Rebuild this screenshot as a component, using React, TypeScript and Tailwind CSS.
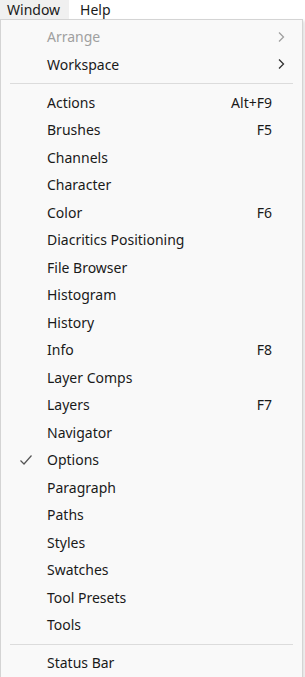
const items: { label: string; shortcut?: string; checked?: boolean }[] = [
  { label: 'Actions', shortcut: 'Alt+F9' },
  { label: 'Brushes', shortcut: 'F5' },
  { label: 'Channels' },
  { label: 'Character' },
  { label: 'Color', shortcut: 'F6' },
  { label: 'Diacritics Positioning' },
  { label: 'File Browser' },
  { label: 'Histogram' },
  { label: 'History' },
  { label: 'Info', shortcut: 'F8' },
  { label: 'Layer Comps' },
  { label: 'Layers', shortcut: 'F7' },
  { label: 'Navigator' },
  { label: 'Options', checked: true },
  { label: 'Paragraph' },
  { label: 'Paths' },
  { label: 'Styles' },
  { label: 'Swatches' },
  { label: 'Tool Presets' },
  { label: 'Tools' },
];

const Chevron = ({ color }: { color: string }) => (
  <svg width="8" height="12" viewBox="0 0 8 12" fill="none">
    <path d="M2 1.5 L6.5 6 L2 10.5" stroke={color} strokeWidth="1.3" />
  </svg>
);

const Check = () => (
  <svg width="14" height="12" viewBox="0 0 14 12" fill="none">
    <path d="M1.5 6.5 L5 10 L12.5 1.5" stroke="#555" strokeWidth="1.2" />
  </svg>
);

const Row = ({
  label,
  shortcut,
  checked,
  disabled,
  sub,
}: {
  label: string;
  shortcut?: string;
  checked?: boolean;
  disabled?: boolean;
  sub?: boolean;
}) => (
  <div className="flex h-[27.5px] items-center">
    <div className="flex w-[46px] items-center justify-center pl-[4px]">{checked && <Check />}</div>
    <span className={`flex-1 ${disabled ? 'text-[#a0a0a0]' : 'text-[#1a1a1a]'}`}>{label}</span>
    {shortcut && <span className="pr-[30px] text-[#1a1a1a]">{shortcut}</span>}
    {sub && (
      <div className="flex w-[30px] items-center justify-center pr-[12px]">
        <Chevron color={disabled ? '#a0a0a0' : '#333'} />
      </div>
    )}
  </div>
);

const Separator = () => <div className="mx-[9px] mb-[4.5px] mt-[5px] h-px bg-[#dcdcdc]" />;

const App = () => {
  return (
    <div
      className="h-[677px] w-[305px] overflow-hidden bg-white text-[14px]"
      style={{ fontFamily: '"Noto Sans", "Open Sans", sans-serif' }}
    >
      <div className="flex h-[19px] items-center">
        <div className="flex h-full items-center bg-[#f0f0f0] pl-[7px] pr-[9px] text-[#1a1a1a]">Window</div>
        <div className="pl-[11px] text-[#1a1a1a]">Help</div>
      </div>
      <div className="mr-[2px] h-[700px] border border-[#d4d4d4] bg-[#f9f9f9] pt-[3px] shadow-[2px_2px_3px_rgba(0,0,0,0.12)]">
        <Row label="Arrange" disabled sub />
        <Row label="Workspace" sub />
        <Separator />
        {items.map((it) => (
          <Row key={it.label} {...it} />
        ))}
        <Separator />
        <Row label="Status Bar" />
      </div>
    </div>
  );
};

export default App;
